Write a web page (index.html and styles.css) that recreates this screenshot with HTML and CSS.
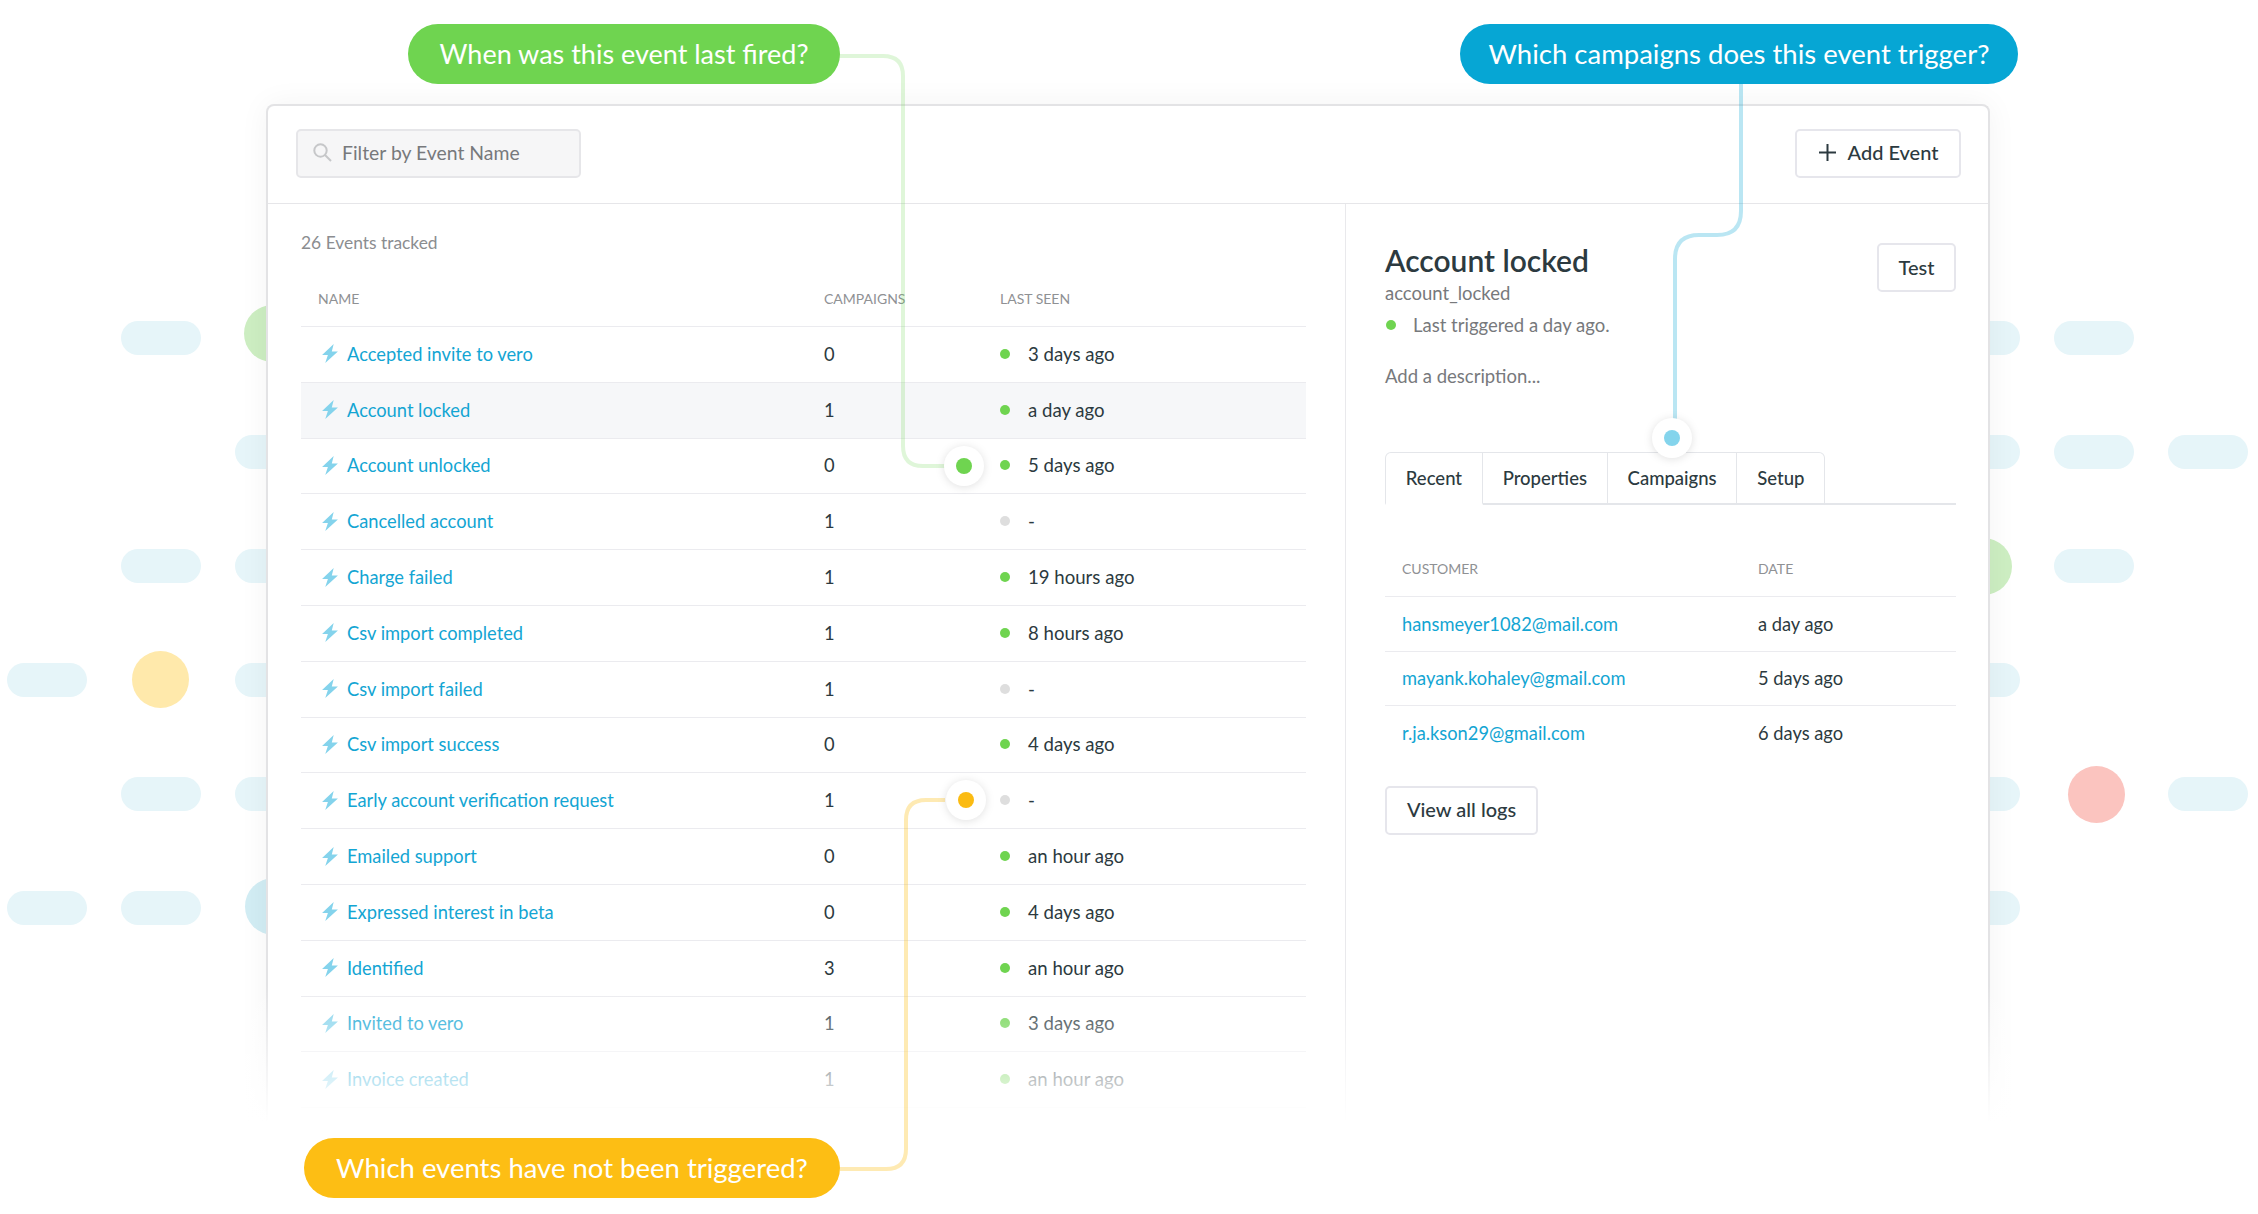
FILE: index.html
```html
<!DOCTYPE html>
<html lang="en">

<head>
    <meta charset="UTF-8">
    <title>Events</title>
    <link rel="stylesheet" href="styles.css">
</head>

<body>
    <svg class="defs" width="0" height="0">
        <symbol id="bolt" viewBox="0 0 15 18">
            <path d="M11 0 L0 10.5 H5.5 L3 18 L15 7 H9.2 Z" />
        </symbol>
    </svg>

    <div class="page">
        <!-- decoration behind the card -->
        <div class="bg-grid bg-left">
            <span></span><span class="pill"></span><span class="circle green"></span>
            <span></span><span></span><span class="pill"></span>
            <span></span><span class="pill"></span><span class="pill"></span>
            <span class="pill"></span><span class="circle yellow"></span><span class="pill"></span>
            <span></span><span class="pill"></span><span class="pill"></span>
            <span class="pill"></span><span class="pill"></span><span class="circle blue"></span>
        </div>
        <div class="bg-grid bg-right">
            <span class="pill"></span><span class="pill"></span><span></span>
            <span class="pill"></span><span class="pill"></span><span class="pill"></span>
            <span class="circle green"></span><span class="pill"></span><span></span>
            <span class="pill"></span><span></span><span></span>
            <span class="pill"></span><span class="circle red"></span><span class="pill"></span>
            <span class="pill"></span><span></span><span></span>
        </div>

        <div class="card">
            <div class="topbar">
                <div class="search">
                    <svg class="search-icon" viewBox="0 0 19 19">
                        <circle cx="7.5" cy="7.5" r="6.2" />
                        <path d="M12 12 L18 18" />
                    </svg>
                    Filter by Event Name
                </div>
                <div class="btn add-btn">
                    <svg class="plus-icon" viewBox="0 0 17 17">
                        <path d="M8.5 0 V17 M0 8.5 H17" />
                    </svg>
                    Add Event
                </div>
            </div>

            <div class="panes">
                <div class="left">
                    <div class="count">26 Events tracked</div>
                    <div class="row head">
                        <div class="name">NAME</div>
                        <div>CAMPAIGNS</div>
                        <div>LAST SEEN</div>
                    </div>
                    <div class="row">
                        <div class="name"><svg class="bolt"><use href="#bolt" /></svg><a>Accepted invite to vero</a></div>
                        <div>0</div>
                        <div class="seen"><i class="dot"></i>3 days ago</div>
                    </div>
                    <div class="row selected">
                        <div class="name"><svg class="bolt"><use href="#bolt" /></svg><a>Account locked</a></div>
                        <div>1</div>
                        <div class="seen"><i class="dot"></i>a day ago</div>
                    </div>
                    <div class="row">
                        <div class="name"><svg class="bolt"><use href="#bolt" /></svg><a>Account unlocked</a></div>
                        <div>0</div>
                        <div class="seen"><i class="dot"></i>5 days ago</div>
                    </div>
                    <div class="row">
                        <div class="name"><svg class="bolt"><use href="#bolt" /></svg><a>Cancelled account</a></div>
                        <div>1</div>
                        <div class="seen"><i class="dot off"></i>-</div>
                    </div>
                    <div class="row">
                        <div class="name"><svg class="bolt"><use href="#bolt" /></svg><a>Charge failed</a></div>
                        <div>1</div>
                        <div class="seen"><i class="dot"></i>19 hours ago</div>
                    </div>
                    <div class="row">
                        <div class="name"><svg class="bolt"><use href="#bolt" /></svg><a>Csv import completed</a></div>
                        <div>1</div>
                        <div class="seen"><i class="dot"></i>8 hours ago</div>
                    </div>
                    <div class="row">
                        <div class="name"><svg class="bolt"><use href="#bolt" /></svg><a>Csv import failed</a></div>
                        <div>1</div>
                        <div class="seen"><i class="dot off"></i>-</div>
                    </div>
                    <div class="row">
                        <div class="name"><svg class="bolt"><use href="#bolt" /></svg><a>Csv import success</a></div>
                        <div>0</div>
                        <div class="seen"><i class="dot"></i>4 days ago</div>
                    </div>
                    <div class="row">
                        <div class="name"><svg class="bolt"><use href="#bolt" /></svg><a>Early account verification request</a></div>
                        <div>1</div>
                        <div class="seen"><i class="dot off"></i>-</div>
                    </div>
                    <div class="row">
                        <div class="name"><svg class="bolt"><use href="#bolt" /></svg><a>Emailed support</a></div>
                        <div>0</div>
                        <div class="seen"><i class="dot"></i>an hour ago</div>
                    </div>
                    <div class="row">
                        <div class="name"><svg class="bolt"><use href="#bolt" /></svg><a>Expressed interest in beta</a></div>
                        <div>0</div>
                        <div class="seen"><i class="dot"></i>4 days ago</div>
                    </div>
                    <div class="row">
                        <div class="name"><svg class="bolt"><use href="#bolt" /></svg><a>Identified</a></div>
                        <div>3</div>
                        <div class="seen"><i class="dot"></i>an hour ago</div>
                    </div>
                    <div class="row">
                        <div class="name"><svg class="bolt"><use href="#bolt" /></svg><a>Invited to vero</a></div>
                        <div>1</div>
                        <div class="seen"><i class="dot"></i>3 days ago</div>
                    </div>
                    <div class="row">
                        <div class="name"><svg class="bolt"><use href="#bolt" /></svg><a>Invoice created</a></div>
                        <div>1</div>
                        <div class="seen"><i class="dot"></i>an hour ago</div>
                    </div>
                </div>

                <div class="right">
                    <div class="detail-head">
                        <div>
                            <h1>Account locked</h1>
                            <div class="muted slug">account_locked</div>
                            <div class="muted trigger"><i class="dot"></i>Last triggered a day ago.</div>
                            <div class="muted desc">Add a description...</div>
                        </div>
                        <div class="btn test-btn">Test</div>
                    </div>

                    <div class="tabs">
                        <div class="tab active">Recent</div>
                        <div class="tab">Properties</div>
                        <div class="tab">Campaigns</div>
                        <div class="tab">Setup</div>
                    </div>

                    <div class="log head">
                        <div>CUSTOMER</div>
                        <div>DATE</div>
                    </div>
                    <div class="log">
                        <a>hansmeyer1082@mail.com</a>
                        <div>a day ago</div>
                    </div>
                    <div class="log">
                        <a>mayank.kohaley@gmail.com</a>
                        <div>5 days ago</div>
                    </div>
                    <div class="log last">
                        <a>r.ja.kson29@gmail.com</a>
                        <div>6 days ago</div>
                    </div>

                    <div class="btn logs-btn">View all logs</div>
                </div>
            </div>
        </div>

        <div class="fade"></div>

        <!-- callouts and connectors sit on top of the card -->
        <svg class="connectors" viewBox="0 0 2258 1214">
            <path class="line line-green" d="M839 56 H883 Q903 56 903 76 V446 Q903 466 923 466 H945" />
            <path class="line line-blue" d="M1741 84 V211 Q1741 235 1717 235 H1699 Q1675 235 1675 259 V420" />
            <path class="line line-yellow" d="M840 1169 H886 Q906 1169 906 1149 V820 Q906 800 926 800 H945" />
            <circle class="node" cx="964" cy="466" r="20" />
            <circle class="node" cx="1672" cy="438" r="20" />
            <circle class="node" cx="966" cy="800" r="20" />
            <circle class="fill-green" cx="964" cy="466" r="8" />
            <circle class="fill-blue" cx="1672" cy="438" r="8" />
            <circle class="fill-yellow" cx="966" cy="800" r="8" />
        </svg>

        <div class="callout callout-green">When was this event last fired?</div>
        <div class="callout callout-blue">Which campaigns does this event trigger?</div>
        <div class="callout callout-yellow">Which events have not been triggered?</div>
    </div>
</body>

</html>
```

FILE: styles.css
```css
* {
    box-sizing: border-box;
}

body {
    margin: 0;
    background: white;
    font-family: Lato, "Open Sans", sans-serif;
    color: #2c3a40;
    overflow: hidden;
}

.defs {
    display: block;
}

a {
    color: #13a5d3;
}

.page {
    position: relative;
    width: 2258px;
    height: 1214px;
    padding: 104px 268px 0 266px;
    overflow: hidden;
}

/* background dots */
.bg-grid {
    position: absolute;
    top: 321px;
    display: grid;
    grid-template-columns: repeat(3, 80px);
    grid-auto-rows: 34px;
    column-gap: 34px;
    row-gap: 80px;
}

.bg-left {
    left: 7px;
}

.bg-right {
    left: 1940px;
}

.pill {
    border-radius: 17px;
    background: #e6f5f9;
}

.circle {
    width: 57px;
    height: 57px;
    border-radius: 50%;
    place-self: center;
}

.green {
    background: #cdeec2;
}

.yellow {
    background: #ffe9ab;
}

.blue {
    background: #d2edf4;
}

.red {
    background: #fbc4bf;
}

.bg-left .green {
    transform: translate(-3px, -5px);
}

.bg-left .yellow {
    transform: translate(-1px, -1px);
}

.bg-left .blue {
    transform: translate(-2px, -2px);
}

.bg-right .green {
    transform: translateX(3px);
}

.bg-right .red {
    transform: translateX(2px);
}

/* card */
.card {
    position: relative;
    height: 1040px;
    background: white;
    border: 2px solid #e3e3e5;
    border-bottom: none;
    border-radius: 8px 8px 0 0;
    box-shadow: 0 0 30px rgba(0, 0, 0, 0.05);
}

.topbar {
    display: flex;
    justify-content: space-between;
    align-items: flex-start;
    height: 98px;
    padding: 23px 27px 0 28px;
    border-bottom: 1px solid #e6e6e9;
}

.search {
    display: flex;
    align-items: center;
    width: 285px;
    height: 49px;
    padding: 0 0 2px 15px;
    background: #f6f6f7;
    border: 2px solid #e6e6e9;
    border-radius: 5px;
    color: #77797c;
    font-size: 19.4px;
}

.search-icon {
    width: 19px;
    height: 19px;
    margin-right: 10px;
    fill: none;
    stroke: #c6c7c9;
    stroke-width: 2;
}

.btn {
    display: flex;
    align-items: center;
    justify-content: center;
    height: 49px;
    padding-bottom: 2px;
    background: white;
    border: 2px solid #e6e6ec;
    border-radius: 5px;
    font-size: 20px;
    font-weight: 500;
}

.add-btn {
    width: 166px;
    padding-bottom: 3px;
    padding-left: 2px;
}

.plus-icon {
    width: 17px;
    height: 17px;
    margin-right: 11px;
    fill: none;
    stroke: #2c3a40;
    stroke-width: 2;
}

.panes {
    display: flex;
}

.left {
    width: 1078px;
    padding: 29px 39px 0 33px;
    border-right: 1px solid #e9e9ec;
    height: 940px;
}

.count {
    height: 20px;
    margin-bottom: 19px;
    color: #8b8d90;
    font-size: 17.4px;
    line-height: 20px;
}

.row {
    display: grid;
    grid-template-columns: 523px 176px 1fr;
    align-items: center;
    height: 55.8px;
    border-bottom: 1px solid #ebebef;
    font-size: 18.3px;
    line-height: 24px;
}

.row > div {
    padding-bottom: 1px;
}

.row.head {
    height: 55px;
    color: #8f9194;
    font-size: 14px;
}

.row.head .name {
    padding-left: 17px;
}

.row.selected {
    background: #f6f7f9;
}

.name {
    display: flex;
    align-items: center;
    padding-left: 21px;
}

.bolt {
    width: 16px;
    height: 19px;
    margin-right: 9px;
    fill: #84d3ec;
}

.seen {
    display: flex;
    align-items: center;
    font-size: 18.6px;
}

.dot {
    flex: none;
    width: 10px;
    height: 10px;
    margin-right: 18px;
    border-radius: 50%;
    background: #6fd450;
}

.dot.off {
    background: #dedede;
}

.right {
    flex: 1;
    padding: 38px 32px 0 39px;
}

.detail-head {
    display: flex;
    justify-content: space-between;
    align-items: flex-start;
}

h1 {
    margin: 0;
    font-size: 30px;
    font-weight: 600;
    line-height: 36px;
}

.muted {
    color: #77797c;
    font-size: 18.5px;
    line-height: 24px;
}

.slug {
    margin-top: 3px;
}

.trigger {
    display: flex;
    align-items: center;
    margin-top: 8px;
}

.trigger .dot {
    margin-left: 1px;
    margin-right: 17px;
}

.desc {
    margin-top: 27px;
}

.test-btn {
    width: 79px;
    margin-top: 1px;
}

.tabs {
    display: flex;
    height: 53px;
    margin-top: 64px;
    border-bottom: 2px solid #e4e6ea;
}

.tab {
    display: flex;
    align-items: center;
    height: 53px;
    padding: 0 19.8px 1px;
    border: 1px solid #e4e6ea;
    border-left: none;
    border-bottom: 2px solid #e4e6ea;
    font-size: 18.5px;
    font-weight: 500;
}

.tab:last-child {
    border-top-right-radius: 6px;
}

.tab.active {
    border-left: 1px solid #e4e6ea;
    border-bottom-color: white;
    border-top-left-radius: 6px;
}

.log {
    display: grid;
    grid-template-columns: 356px 1fr;
    align-items: center;
    height: 54.5px;
    padding-left: 17px;
    border-bottom: 1px solid #ebebef;
    font-size: 18.3px;
}

.log.head {
    height: 56px;
    margin-top: 36px;
    color: #8f9194;
    font-size: 14px;
}

.log.last {
    border-bottom: none;
}

.logs-btn {
    width: 153px;
    margin-top: 25px;
}

/* bottom of the card fades out */
.fade {
    position: absolute;
    left: 220px;
    right: 220px;
    top: 985px;
    height: 229px;
    background: linear-gradient(to bottom, rgba(255, 255, 255, 0), white 60%);
}

.connectors {
    position: absolute;
    left: 0;
    top: 0;
    width: 2258px;
    height: 1214px;
}

.line {
    fill: none;
    stroke-width: 4;
}

.line-green {
    stroke: #6fd450;
    stroke-opacity: 0.22;
}

.line-blue {
    stroke: #06a6d4;
    stroke-opacity: 0.28;
}

.line-yellow {
    stroke: #fdbe14;
    stroke-opacity: 0.32;
}

.node {
    fill: white;
    filter: drop-shadow(0 1px 4px rgba(0, 0, 0, 0.12));
}

.fill-green {
    fill: #6fd450;
}

.fill-blue {
    fill: #84d4ec;
}

.fill-yellow {
    fill: #fbbb12;
}

.callout {
    position: absolute;
    display: flex;
    align-items: center;
    justify-content: center;
    height: 60px;
    padding-bottom: 2px;
    border-radius: 30px;
    color: white;
    font-size: 27.5px;
}

.callout-green {
    left: 408px;
    top: 24px;
    width: 432px;
    background: #6fd450;
    font-size: 27px;
}

.callout-blue {
    left: 1460px;
    top: 24px;
    width: 558px;
    background: #06a6d4;
}

.callout-yellow {
    left: 304px;
    top: 1138px;
    width: 536px;
    background: #fdbe14;
}
```
